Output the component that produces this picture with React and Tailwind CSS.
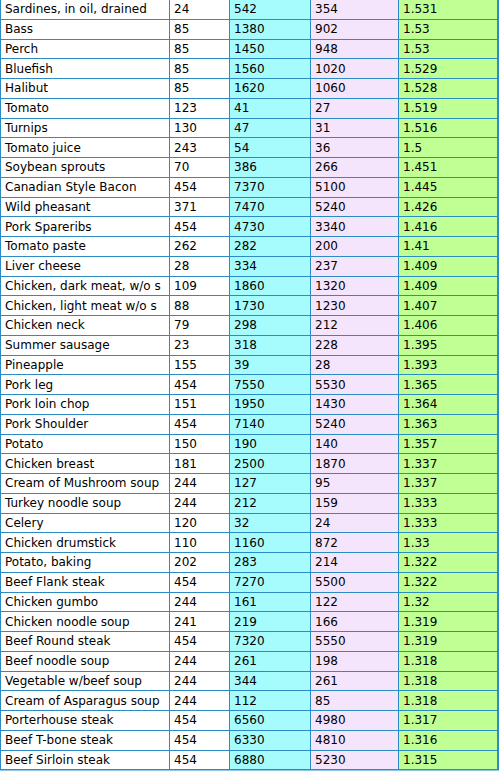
import React from 'react';

const rows = [
  ['Sardines, in oil, drained', '24', '542', '354', '1.531'],
  ['Bass', '85', '1380', '902', '1.53'],
  ['Perch', '85', '1450', '948', '1.53'],
  ['Bluefish', '85', '1560', '1020', '1.529'],
  ['Halibut', '85', '1620', '1060', '1.528'],
  ['Tomato', '123', '41', '27', '1.519'],
  ['Turnips', '130', '47', '31', '1.516'],
  ['Tomato juice', '243', '54', '36', '1.5'],
  ['Soybean sprouts', '70', '386', '266', '1.451'],
  ['Canadian Style Bacon', '454', '7370', '5100', '1.445'],
  ['Wild pheasant', '371', '7470', '5240', '1.426'],
  ['Pork Spareribs', '454', '4730', '3340', '1.416'],
  ['Tomato paste', '262', '282', '200', '1.41'],
  ['Liver cheese', '28', '334', '237', '1.409'],
  ['Chicken, dark meat, w/o s', '109', '1860', '1320', '1.409'],
  ['Chicken, light meat w/o s', '88', '1730', '1230', '1.407'],
  ['Chicken neck', '79', '298', '212', '1.406'],
  ['Summer sausage', '23', '318', '228', '1.395'],
  ['Pineapple', '155', '39', '28', '1.393'],
  ['Pork leg', '454', '7550', '5530', '1.365'],
  ['Pork loin chop', '151', '1950', '1430', '1.364'],
  ['Pork Shoulder', '454', '7140', '5240', '1.363'],
  ['Potato', '150', '190', '140', '1.357'],
  ['Chicken breast', '181', '2500', '1870', '1.337'],
  ['Cream of Mushroom soup', '244', '127', '95', '1.337'],
  ['Turkey noodle soup', '244', '212', '159', '1.333'],
  ['Celery', '120', '32', '24', '1.333'],
  ['Chicken drumstick', '110', '1160', '872', '1.33'],
  ['Potato, baking', '202', '283', '214', '1.322'],
  ['Beef Flank steak', '454', '7270', '5500', '1.322'],
  ['Chicken gumbo', '244', '161', '122', '1.32'],
  ['Chicken noodle soup', '241', '219', '166', '1.319'],
  ['Beef Round steak', '454', '7320', '5550', '1.319'],
  ['Beef noodle soup', '244', '261', '198', '1.318'],
  ['Vegetable w/beef soup', '244', '344', '261', '1.318'],
  ['Cream of Asparagus soup', '244', '112', '85', '1.318'],
  ['Porterhouse steak', '454', '6560', '4980', '1.317'],
  ['Beef T-bone steak', '454', '6330', '4810', '1.316'],
  ['Beef Sirloin steak', '454', '6880', '5230', '1.315'],
];

const App = () => {
  return (
    <div
      className="w-[500px] h-[772px] bg-white overflow-hidden text-[12px] text-black"
      style={{ fontFamily: '"DejaVu Sans", Verdana, sans-serif' }}
    >
      <div className="flex flex-col border-b border-[#8ec6e6] w-[499px]">
        {rows.map((r, i) => (
          <div key={i} className="flex h-[19.75px] border-l border-[#2d8bc3]">
            <div className="w-[169px] shrink-0 border-r border-b border-[#2d8bc3] pl-1 flex items-center whitespace-nowrap overflow-hidden">
              {r[0]}
            </div>
            <div className="w-[60px] shrink-0 border-r border-b border-[#2d8bc3] pl-1 flex items-center">
              {r[1]}
            </div>
            <div className="w-[81px] shrink-0 border-r border-b border-[#2d8bc3] bg-[#a6fcfd] pl-1 flex items-center">
              {r[2]}
            </div>
            <div className="w-[88px] shrink-0 border-r border-b border-[#2d8bc3] bg-[#f5e5fc] pl-1 flex items-center">
              {r[3]}
            </div>
            <div className="w-[100px] shrink-0 border-r-2 border-b border-[#2d8bc3] bg-[#bfff93] pl-1 flex items-center">
              {r[4]}
            </div>
          </div>
        ))}
      </div>
    </div>
  );
};

export default App;
